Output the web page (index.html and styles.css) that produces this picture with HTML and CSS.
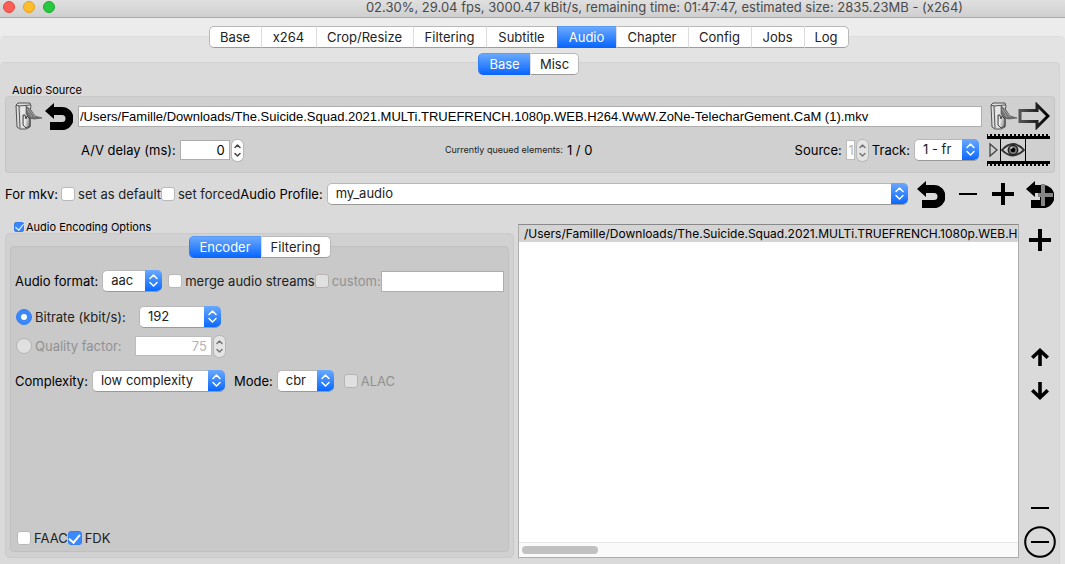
FILE: index.html
```
<!DOCTYPE html>
<html lang="en">
<head>
<meta charset="utf-8">
<meta name="viewport" content="width=device-width, initial-scale=1">
<title>02.30%, 29.04 fps, 3000.47 kBit/s - (x264)</title>
<link rel="stylesheet" href="styles.css">
</head>
<body>
<svg class="symbols" aria-hidden="true">
  <defs>
    <linearGradient id="metal" x1="0" y1="0" x2="1" y2="0.3"><stop offset="0" stop-color="#a5a5a5"/><stop offset=".35" stop-color="#f4f4f4"/><stop offset="1" stop-color="#8d8d8d"/></linearGradient>
    <linearGradient id="edge" x1="0" y1="0" x2="1" y2="0"><stop offset="0" stop-color="#555"/><stop offset="1" stop-color="#000"/></linearGradient>
    <symbol id="open" viewBox="0 0 27 28">
      <path d="M1 3 3 1h12l1 3-1 5v16l-4 2H5l-3-2z" fill="#dcdcdc" stroke="#444" stroke-width=".9"/>
      <path d="M1 3l3 1 11-1M4 4l1 22" fill="none" stroke="#444" stroke-width=".9"/>
      <path d="M6 5l8-1-2 10-4 9-2 2z" fill="#e6e6e6"/>
      <path d="M11 4l5 4 4 6 7 2-8 1-5-1-3-4z" fill="#707070" stroke="#484848" stroke-width=".6"/>
      <path d="M12 7l5 8M14 7l6 8" stroke="#bbb" stroke-width=".7"/>
      <path d="M8 13h2l1 4 1-3 3 3v7l-4 2-3-3z" fill="url(#metal)" stroke="#333" stroke-width=".9"/>
    </symbol>
    <symbol id="undo" viewBox="0 0 28 27">
      <path d="M0 8 9 0v4h8a11 11 0 0 1 0 23H5v-8h12a3.500 3.500 0 0 0 0-7H9v4z"/>
    </symbol>
    <symbol id="plus" viewBox="0 0 24 24"><path d="M10 1h4v9h9v4h-9v9h-4v-9H1v-4h9z"/></symbol>
    <symbol id="minus" viewBox="0 0 24 24"><path d="M3 11h18v2H3z"/></symbol>
    <symbol id="up" viewBox="0 0 18 18"><path d="M7.200 18V6.500L2.500 11 0 8.500 9 0l9 8.500-2.500 2.500-4.700-4.500V18z"/></symbol>
    <symbol id="chevrons" viewBox="0 0 17 21"><path d="M5 8.500 8.500 5 12 8.500M5 12.500 8.500 16 12 12.500" fill="none" stroke="currentColor" stroke-width="1.500" stroke-linecap="round" stroke-linejoin="round"/></symbol>
    <symbol id="steps" viewBox="0 0 11 21"><path d="M3 7.500 5.500 5 8 7.500M3 13.500 5.500 16 8 13.500" fill="none" stroke="currentColor" stroke-width="1.500" stroke-linecap="round" stroke-linejoin="round"/></symbol>
  </defs>
</svg>
<div class="window">
  <header class="titlebar">
    <div class="lights">
      <button class="light close" aria-label="Close"></button>
      <button class="light minimize" aria-label="Minimize"></button>
      <button class="light maximize" aria-label="Maximize"></button>
    </div>
    <div class="title">02.30%, 29.04 fps, 3000.47 kBit/s, remaining time: 01:47:47, estimated size: 2835.23MB - (x264)</div>
  </header>

  <nav class="tabs main-tabs">
    <button>Base</button><button>x264</button><button>Crop/Resize</button><button>Filtering</button><button>Subtitle</button><button class="active">Audio</button><button>Chapter</button><button>Config</button><button>Jobs</button><button>Log</button>
  </nav>

  <main class="outer">
    <nav class="tabs sub-tabs"><button class="active">Base</button><button>Misc</button></nav>
    <div class="page">
      <h2 class="caption">Audio Source</h2>
      <section class="source">
        <div class="source-tools">
          <button class="icon" aria-label="Open file"><svg width="27" height="28"><use href="#open"/></svg></button>
          <button class="icon" aria-label="Reset"><svg width="28" height="27"><use href="#undo"/></svg></button>
        </div>
        <input class="field path" type="text" aria-label="Audio source" value="/Users/Famille/Downloads/The.Suicide.Squad.2021.MULTi.TRUEFRENCH.1080p.WEB.H264.WwW.ZoNe-TelecharGement.CaM (1).mkv">
        <div class="source-tools next">
          <button class="icon" aria-label="Open next"><svg width="27" height="28"><use href="#open"/></svg></button>
          <button class="icon" aria-label="Next"><svg width="32" height="28" viewBox="0 0 32 28"><path d="M2 8.500h17V3l11 11-11 11v-5.500H2z" fill="none" stroke="url(#edge)" stroke-width="3"/></svg></button>
        </div>
        <div class="source-row">
          <div class="group">
            <label for="delay">A/V delay (ms):</label>
            <div class="spin">
              <input id="delay" class="field delay" type="text" value="0">
              <button class="stepper" aria-label="Change delay"><svg width="11" height="21"><use href="#steps"/></svg></button>
            </div>
          </div>
          <div class="group queue"><small>Currently queued elements:</small><span>1 / 0</span></div>
          <div class="group">
            <label for="src">Source:</label>
            <div class="spin">
              <input id="src" class="field src" type="text" value="1" disabled>
              <button class="stepper" aria-label="Change source" disabled><svg width="11" height="21"><use href="#steps"/></svg></button>
            </div>
            <label for="track">Track:</label>
            <div class="select track"><select id="track"><option>1 - fr</option></select><svg class="cap"><use href="#chevrons"/></svg></div>
          </div>
        </div>
        <button class="icon film" aria-label="Preview">
          <svg width="63" height="32" viewBox="0 0 63 32">
            <path d="M0 0h63v5H0zM0 27h63v5H0z"/>
            <path d="M1 1h62M1 31h62" stroke="#d0d0d0" stroke-width="2" stroke-dasharray="2 2"/>
            <path d="M13.500 5v22M38.500 5v22" stroke="#000"/>
            <path d="M3 10v12l7-6z" fill="none" stroke="#444" stroke-width="1.300"/>
            <path d="M15 16q11-12 22 0-11 11-22 0z" fill="none" stroke="#333" stroke-width="1.800"/>
            <circle cx="26" cy="16" r="4.700" fill="#777" stroke="#222" stroke-width="1.500"/><circle cx="26" cy="16" r="2.300"/><circle cx="24.500" cy="13.800" r="1" fill="#ddd"/>
          </svg>
        </button>
      </section>

      <section class="profile">
        <span class="mkv">For mkv:</span>
        <label class="check"><input type="checkbox">set as default</label>
        <label class="check"><input type="checkbox">set forced</label>
        <label for="profile">Audio Profile:</label>
        <div class="select wide"><select id="profile"><option>my_audio</option></select><svg class="cap"><use href="#chevrons"/></svg></div>
        <div class="profile-tools">
          <button class="icon" aria-label="Reset profile"><svg width="28" height="27"><use href="#undo"/></svg></button>
          <button class="icon" aria-label="Remove profile"><svg width="24" height="24"><use href="#minus"/></svg></button>
          <button class="icon" aria-label="Add profile"><svg width="24" height="24"><use href="#plus"/></svg></button>
          <button class="icon" aria-label="Restore profiles"><svg width="28" height="27" viewBox="0 0 28 27"><path d="M0 8 9 0v4h8a11 11 0 0 1 0 23H5v-8h9v-7H9v4z"/><path d="M15 3h4v9h8v4h-8v9h-4v-9h-3v-4h3z" fill="#858585"/></svg></button>
        </div>
      </section>

      <div class="columns">
        <section class="encoding">
          <label class="check small"><input type="checkbox" checked>Audio Encoding Options</label>
          <div class="encoding-box">
            <nav class="tabs enc-tabs"><button class="active">Encoder</button><button>Filtering</button></nav>
            <div class="encoder">
              <div class="row format">
                <label for="format">Audio format:</label>
                <div class="select aac"><select id="format"><option>aac</option></select><svg class="cap"><use href="#chevrons"/></svg></div>
                <div class="joined">
                  <label class="check"><input type="checkbox">merge audio streams</label>
                  <label class="check off"><input type="checkbox" disabled>custom:</label>
                  <input class="field custom" type="text" aria-label="Custom format">
                </div>
              </div>
              <div class="row">
                <label class="check rate"><input type="radio" name="rate" checked>Bitrate (kbit/s):</label>
                <div class="select bitrate"><select aria-label="Bitrate"><option>192</option></select><svg class="cap"><use href="#chevrons"/></svg></div>
              </div>
              <div class="row quality">
                <label class="check rate off"><input type="radio" name="rate" disabled>Quality factor:</label>
                <div class="spin">
                  <input class="field factor" type="text" aria-label="Quality factor" value="75" disabled>
                  <button class="stepper" aria-label="Change quality" disabled><svg width="11" height="21"><use href="#steps"/></svg></button>
                </div>
              </div>
              <div class="row complexity">
                <label for="complexity">Complexity:</label>
                <div class="select low"><select id="complexity"><option>low complexity</option></select><svg class="cap"><use href="#chevrons"/></svg></div>
                <label class="mode" for="mode">Mode:</label>
                <div class="select cbr"><select id="mode"><option>cbr</option></select><svg class="cap"><use href="#chevrons"/></svg></div>
                <label class="check off alac"><input type="checkbox" disabled>ALAC</label>
              </div>
              <div class="joined codecs">
                <label class="check"><input type="checkbox">FAAC</label>
                <label class="check"><input type="checkbox" checked>FDK</label>
              </div>
            </div>
          </div>
        </section>
        <section class="queue-list">
          <ul><li>/Users/Famille/Downloads/The.Suicide.Squad.2021.MULTi.TRUEFRENCH.1080p.WEB.H264.WwW.ZoNe-TelecharGement.CaM (1).mkv</li></ul>
          <div class="scrollbar"><div class="thumb"></div></div>
        </section>
        <aside class="queue-tools">
          <button class="icon" aria-label="Add to queue"><svg width="24" height="24"><use href="#plus"/></svg></button>
          <div class="move">
            <button class="icon" aria-label="Move up"><svg width="18" height="18"><use href="#up"/></svg></button>
            <button class="icon" aria-label="Move down"><svg width="18" height="18" viewBox="0 0 18 18"><path d="M7.200 0v11.500L2.500 7 0 9.500 9 18l9-8.500L15.500 7l-4.700 4.500V0z"/></svg></button>
          </div>
          <button class="icon" aria-label="Remove from queue"><svg width="24" height="24"><use href="#minus"/></svg></button>
          <button class="icon" aria-label="Clear queue"><svg width="32" height="32" viewBox="0 0 32 32"><circle cx="16" cy="16" r="14.800" fill="none" stroke="#000" stroke-width="2"/><path d="M7 15h18v2H7z"/></svg></button>
        </aside>
      </div>
    </div>
  </main>
</div>
</body>
</html>
```
FILE: styles.css
```
* { box-sizing: border-box; }
body {
  margin: 0;
  background: #ececec;
  color: #000;
  font: 13px/16px Inter, "Liberation Sans", sans-serif;
}
button, input, select { font: inherit; color: inherit; margin: 0; }
button { border: 0; padding: 0; background: none; }
svg { display: block; }
.symbols { position: absolute; width: 0; height: 0; }
.window { min-height: 100vh; display: flex; flex-direction: column; white-space: nowrap; }

.titlebar {
  height: 18px;
  display: flex;
  align-items: flex-start;
  background: linear-gradient(#e0e0e0, #cfcfcf);
  border-bottom: 1px solid #a8a8a8;
  color: #4a4a4a;
}
.lights { display: flex; gap: 8px; padding: 1px 0 0 3px; width: 264px; }
.light { width: 12px; height: 12px; border-radius: 50%; border: 1px solid; }
.close { background: #ff5f57; border-color: #e2463f; }
.minimize { background: #ffbd2e; border-color: #e1a116; }
.maximize { background: #28c940; border-color: #17ab2c; }
.title { flex: 1; text-align: center; line-height: 15px; }

.tabs { display: grid; width: max-content; height: 22px; margin: 0 auto; position: relative; z-index: 1; }
.tabs button {
  height: 22px;
  background: #fff;
  color: #222;
  border: 1px solid #b9b9b9;
  border-left-color: #dcdcdc;
  border-right: 0;
  border-bottom-color: #9d9d9d;
}
.tabs button:first-child { border-radius: 5px 0 0 5px; border-left-color: #b9b9b9; }
.tabs button:last-child { border-radius: 0 5px 5px 0; border-right: 1px solid #b9b9b9; }
.tabs .active, .tabs .active:first-child {
  color: #fff;
  border-color: #5a9bfa #3080fb #0f66f5;
  background: linear-gradient(#6aa8fd, #0a68ff);
}
.main-tabs { grid-template-columns: 52px 55px 97px 73px 71px 59px 72px 63px 53px 45px; margin: 8px auto -12px; right: 4px; }
.sub-tabs { grid-template-columns: 52px 49px; margin-bottom: -13px; right: 4px; }
.enc-tabs { grid-template-columns: 72px 70px; margin-top: 2px; margin-bottom: -12px; }

.outer {
  flex: 1;
  display: flex;
  flex-direction: column;
  padding-top: 16px;
  background: #e3e3e3;
  border-top: 1px solid #dcdcdc;
  border-radius: 5px 5px 0 0;
}
.page {
  flex: 1;
  display: flex;
  flex-direction: column;
  margin-right: 5px;
  padding: 20px 4px 6px 5px;
  background: #dadada;
  border: solid #d2d2d2;
  border-width: 1px 1px 0 0;
  border-radius: 5px 5px 0 0;
}
.caption { margin: 0 7px -1px; font-size: 11px; line-height: 14px; font-weight: 400; }

.source {
  display: grid;
  grid-template-columns: 58px minmax(0, 1fr) 63px;
  grid-template-rows: 30px 32px;
  gap: 3px 5px;
  align-items: center;
  padding: 4px 4px 6px 9px;
  background: #d0d0d0;
  border: 1px solid #c5c5c5;
  border-top-color: #cacaca;
  border-radius: 4px;
}
.source-tools { display: flex; align-items: center; justify-content: space-between; }
.next { padding-left: 3px; }
.next .icon:first-child { margin-right: -2px; }
.field { border: 1px solid #adadad; border-radius: 0; background: #fff; padding: 0 3px; height: 21px; outline: 0; }
.field:disabled { color: #b5b5b5; border-color: #bcbcbc; opacity: 1; }
.path { width: 100%; padding: 0 1px; font-family: "Liberation Sans", Arial, sans-serif; }
.source-row { grid-column: 2; display: flex; justify-content: space-between; align-items: center; padding: 0 3px; }
.group { display: flex; align-items: center; gap: 4px; }
.queue small { font-size: 9px; color: #222; }
.spin { display: flex; align-items: center; gap: 2px; }
.delay, .src, .factor { height: 20px; text-align: right; padding-right: 4px; }
.delay { width: 50px; }
.src { width: 9px; padding: 0; }
.factor { width: 77px; }
.stepper { width: 11px; height: 21px; border-radius: 5px; background: #fff; box-shadow: 0 0 0 1px #b8b8b8; color: #444; }
.stepper:disabled { background: #e4e4e4; color: #777; }

.select { display: grid; height: 22px; }
.select select {
  grid-area: 1 / 1;
  width: 100%;
  height: 22px;
  appearance: none;
  padding: 0 20px 2px 8px;
  color: #222;
  background: #fff;
  border: 1px solid #b8b8b8;
  border-bottom-color: #999;
  border-radius: 5px;
}
.cap {
  grid-area: 1 / 1;
  justify-self: end;
  width: 17px;
  height: 21px;
  color: #fff;
  background: linear-gradient(#6aa8fd, #0a68ff);
  border-radius: 0 5px 5px 0;
  pointer-events: none;
}
.track { width: 65px; }
.wide { flex: 1; margin-left: 4px; }
.aac { width: 60px; }
.bitrate { width: 82px; }
.low { width: 133px; }
.cbr { width: 57px; }

.check { display: inline-flex; align-items: center; gap: 3px; color: #222; }
.check input { appearance: none; width: 14px; height: 14px; flex: none; background: #fff; border: 1px solid #b9b9b9; border-radius: 3px; display: grid; place-items: center; }
.check input[type="radio"] { width: 16px; height: 16px; border-radius: 50%; }
.check input:checked { background: #3b88fd; border-color: #3380f5; }
.check input[type="checkbox"]:checked::after { content: ""; width: 5px; height: 9px; margin-top: -2px; border: solid #fff; border-width: 0 2px 2px 0; transform: rotate(40deg); }
.check input[type="radio"]:checked::after { content: ""; width: 6px; height: 6px; border-radius: 50%; background: #fff; }
.check input:disabled { background: #e0e0e0; border-color: #b5b5b5; }
.off { color: #919191; }
.check.small { position: relative; font-size: 11px; line-height: 12px; gap: 2px; color: #000; }
.small input { width: 10px; height: 10px; border-radius: 2px; }
.small input[type="checkbox"]:checked::after { width: 4px; height: 7px; border-width: 0 1px 1px 0; }

.profile { display: flex; align-items: center; height: 28px; margin: 7px 0 16px; }
.mkv { margin-right: 3px; }
.profile-tools { display: flex; align-items: center; justify-content: space-between; width: 137px; margin: 0 1px 0 9px; }

.columns { flex: 1; display: grid; grid-template-columns: minmax(0, 509fr) minmax(0, 501fr) 32px; gap: 4px; }
.encoding { display: flex; flex-direction: column; }
.encoding > .check { margin: -2px 0 1px 9px; height: 10px; }
.encoding-box { flex: 1; display: flex; flex-direction: column; padding: 0 4px 5px; background: #d1d1d1; border: 1px solid #cacaca; border-radius: 5px; }
.encoder { flex: 1; display: flex; flex-direction: column; padding: 23px 4px 5px; background: #c9c9c9; border: 1px solid #c0c0c0; border-radius: 4px; }
.row { display: flex; align-items: center; height: 22px; }
.format { gap: 4px; margin-bottom: 14px; }
.joined { display: flex; align-items: center; flex: 1; }
.custom { flex: 1; min-width: 0; width: 0; }
.format .joined { margin-left: 2px; }
.rate { width: 124px; padding-left: 1px; }
.quality { margin-top: 7px; }
.quality .rate { width: 120px; }
.complexity { margin-top: 13px; gap: 4px; }
.mode { margin-left: 5px; }
.alac { margin-left: 6px; }
.codecs { flex: none; margin-top: auto; padding-left: 2px; }

.queue-list { display: flex; flex-direction: column; background: #fff; border: 1px solid #acacac; border-top-color: #888; min-width: 0; }
.queue-list ul { flex: 1; margin: 0; padding: 0; list-style: none; overflow: hidden; }
.queue-list li { height: 17px; padding-left: 5px; font-size: 12px; line-height: 17px; background: #d4d4d4; }
.scrollbar { height: 15px; padding: 3px; background: #fafafa; border-top: 1px solid #e6e6e6; }
.thumb { width: 76px; height: 8px; border-radius: 4px; background: #c1c1c1; }
.queue-tools { display: flex; flex-direction: column; align-items: center; padding-top: 4px; margin-right: -1px; }
.move { display: flex; flex-direction: column; gap: 16px; margin: auto 0; }
.queue-tools > .icon:nth-last-child(2) { margin-bottom: 6px; }
```
